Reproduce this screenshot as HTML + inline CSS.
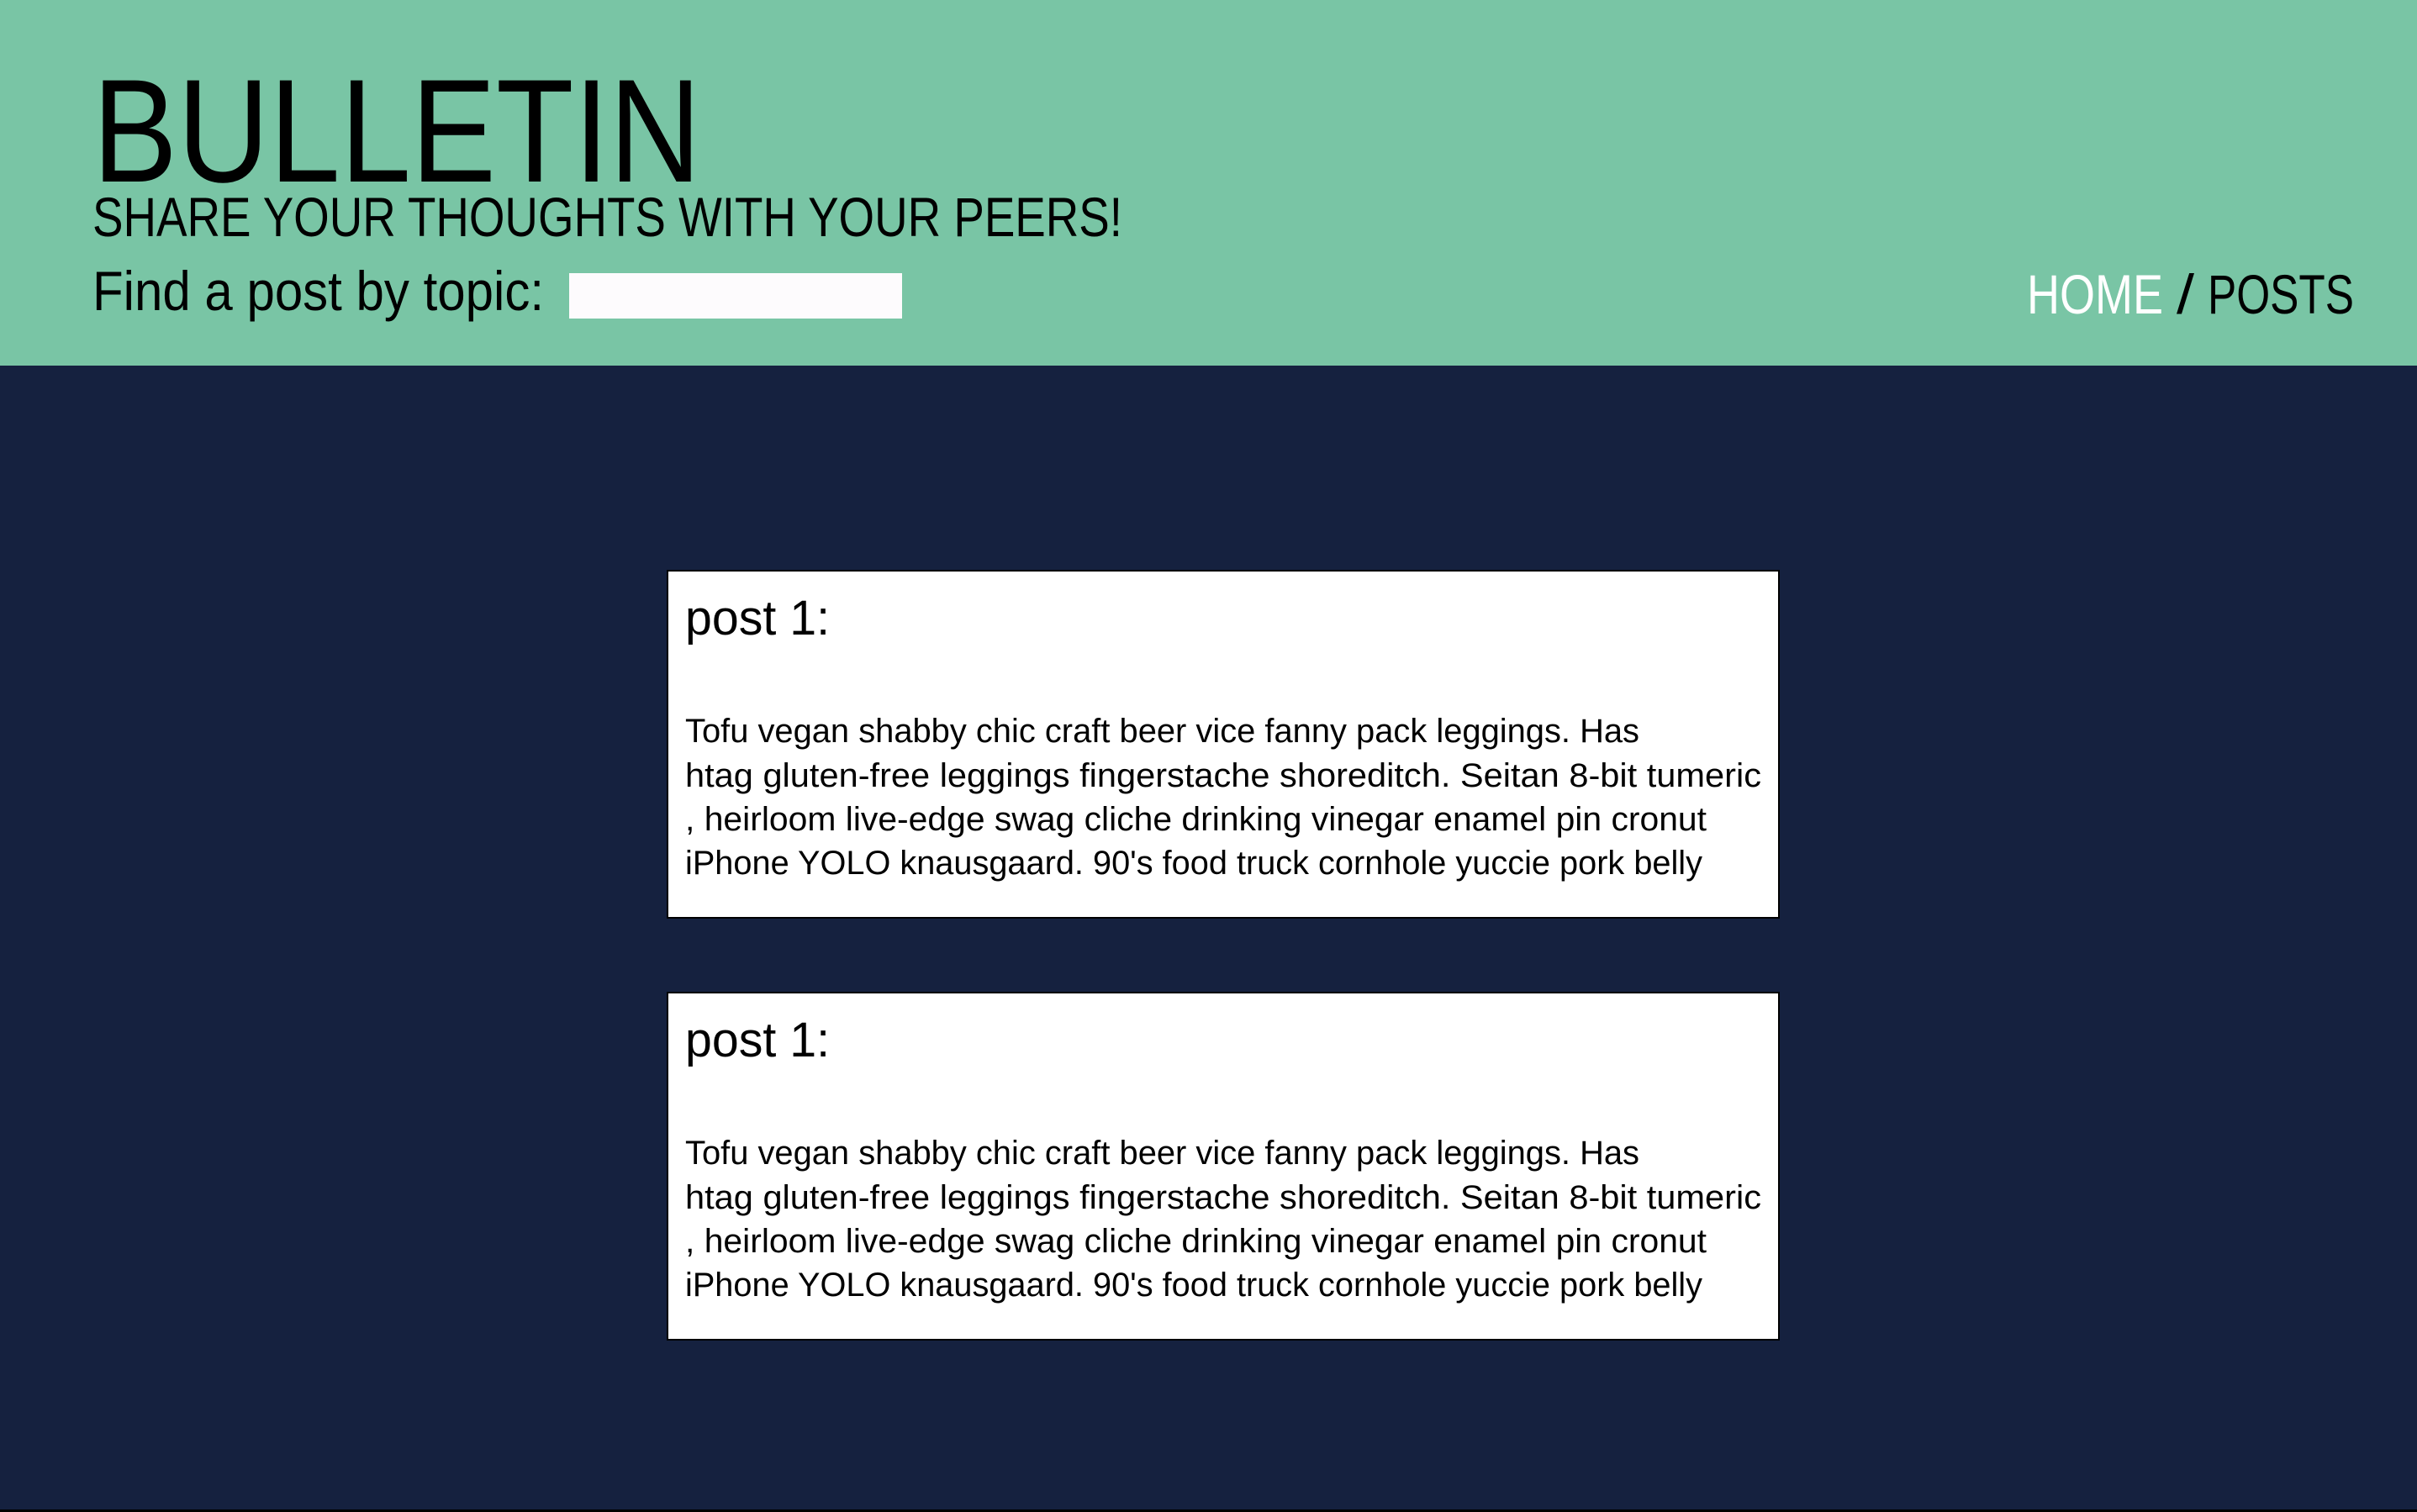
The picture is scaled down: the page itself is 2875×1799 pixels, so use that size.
<!DOCTYPE html>
<html><head><meta charset="utf-8"><style>
html,body{margin:0;padding:0;width:2875px;height:1799px;overflow:hidden;background:#15213f}
svg{display:block}
text{font-family:"Liberation Sans",sans-serif}
</style></head><body>
<svg width="2875" height="1799" viewBox="0 0 2875 1799" xmlns="http://www.w3.org/2000/svg">
<rect x="0" y="0" width="2875" height="1799" fill="#15213f"/>
<rect x="0" y="0" width="2875" height="435" fill="#79c5a5"/>
<rect x="0" y="1796" width="2875" height="3" fill="#000"/>
<text x="110" y="216" font-size="175" textLength="724" lengthAdjust="spacingAndGlyphs" fill="#000">BULLETIN</text>
<text x="110" y="281" font-size="66" textLength="1225" lengthAdjust="spacingAndGlyphs" fill="#000">SHARE YOUR THOUGHTS WITH YOUR PEERS!</text>
<text x="110" y="369" font-size="66" textLength="537" lengthAdjust="spacingAndGlyphs" fill="#000">Find a post by topic:</text>
<rect x="677" y="325" width="396" height="54" fill="#fdfbfd"/>
<text x="2411" y="373" font-size="66" textLength="162" lengthAdjust="spacingAndGlyphs" fill="#fff">HOME</text>
<text x="2589" y="373" font-size="66" textLength="21" lengthAdjust="spacingAndGlyphs" fill="#000">/</text>
<text x="2626" y="373" font-size="66" textLength="174" lengthAdjust="spacingAndGlyphs" fill="#000">POSTS</text>
<g id="c1">
<rect x="794" y="679" width="1322" height="413" fill="#fff" stroke="#000" stroke-width="2"/>
<text x="815" y="755" font-size="58" textLength="172" lengthAdjust="spacingAndGlyphs" fill="#000">post 1:</text>
<text x="815" y="883" font-size="40" textLength="1135" lengthAdjust="spacingAndGlyphs" fill="#000">Tofu vegan shabby chic craft beer vice fanny pack leggings. Has</text>
<text x="815" y="936" font-size="40" textLength="1280" lengthAdjust="spacingAndGlyphs" fill="#000">htag gluten-free leggings fingerstache shoreditch. Seitan 8-bit tumeric</text>
<text x="815" y="988" font-size="40" textLength="1215" lengthAdjust="spacingAndGlyphs" fill="#000">, heirloom live-edge swag cliche drinking vinegar enamel pin cronut</text>
<text x="815" y="1040" font-size="40" textLength="1210" lengthAdjust="spacingAndGlyphs" fill="#000">iPhone YOLO knausgaard. 90's food truck cornhole yuccie pork belly</text>
</g>
<use href="#c1" transform="translate(0,502)"/>
</svg>
</body></html>
